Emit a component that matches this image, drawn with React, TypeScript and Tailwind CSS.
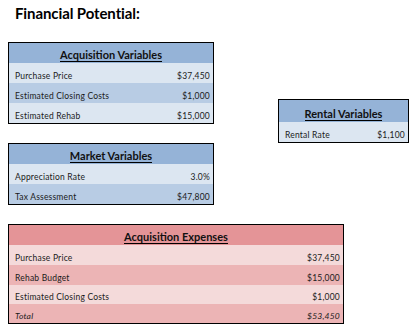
import React from "react";

type Row = { label: string; value: string; italic?: boolean };

function Box({
  title,
  rows,
  headerBg,
  light,
  dark,
  widthClass,
  headerH = "h-[20px]",
  rowHs,
}: {
  title: string;
  rows: Row[];
  headerBg: string;
  light: string;
  dark: string;
  widthClass: string;
  headerH?: string;
  rowHs?: string[];
}) {
  return (
    <div className={`${widthClass} border border-black flex flex-col`}>
      <div className={`${headerH} ${headerBg} flex items-end justify-center pb-[1px]`}>
        <span className="text-[11px] font-bold leading-[11px] text-[#111] border-b border-black pb-[1px]">
          {title}
        </span>
      </div>
      {rows.map((r, i) => (
        <div
          key={r.label}
          className={`${rowHs ? rowHs[i] : "h-[20px]"} ${i % 2 === 0 ? light : dark} flex items-end justify-between pl-[6px] pr-[3px] pb-[3px] text-[8.5px] leading-none text-[#1a1a1a] tracking-[0.2px] ${r.italic ? "italic" : ""}`}
        >
          <span>{r.label}</span>
          <span>{r.value}</span>
        </div>
      ))}
    </div>
  );
}

export default function App() {
  const blue = { headerBg: "bg-[#95b3d7]", light: "bg-[#dce6f1]", dark: "bg-[#b8cce4]" };
  const pink = { headerBg: "bg-[#e49497]", light: "bg-[#f4dada]", dark: "bg-[#ecb4b5]" };
  return (
    <div className="w-[417px] h-[332px] bg-white font-['Lato',sans-serif] text-black">
      <div className="pl-[15px] pt-[6px] h-[42px] text-[15px] font-bold leading-none tracking-[-0.1px]">
        Financial Potential:
      </div>
      <div className="flex">
        <div className="ml-[8px] flex flex-col gap-[19px]">
          <Box
            title="Acquisition Variables"
            widthClass="w-[206px]"
            {...blue}
            rows={[
              { label: "Purchase Price", value: "$37,450" },
              { label: "Estimated Closing Costs", value: "$1,000" },
              { label: "Estimated Rehab", value: "$15,000" },
            ]}
          />
          <Box
            title="Market Variables"
            widthClass="w-[206px]"
            {...blue}
            rows={[
              { label: "Appreciation Rate", value: "3.0%" },
              { label: "Tax Assessment", value: "$47,800" },
            ]}
          />
        </div>
        <div className="ml-[64px] mt-[57px]">
          <Box
            title="Rental Variables"
            widthClass="w-[131px]"
            headerH="h-[22px]"
            {...blue}
            rows={[{ label: "Rental Rate", value: "$1,100" }]}
          />
        </div>
      </div>
      <div className="ml-[8px] mt-[19px]">
        <Box
          title="Acquisition Expenses"
          widthClass="w-[336px]"
          {...pink}
          rowHs={["h-[20px]", "h-[20px]", "h-[19px]", "h-[19px]"]}
          rows={[
            { label: "Purchase Price", value: "$37,450" },
            { label: "Rehab Budget", value: "$15,000" },
            { label: "Estimated Closing Costs", value: "$1,000" },
            { label: "Total", value: "$53,450", italic: true },
          ]}
        />
      </div>
    </div>
  );
}
